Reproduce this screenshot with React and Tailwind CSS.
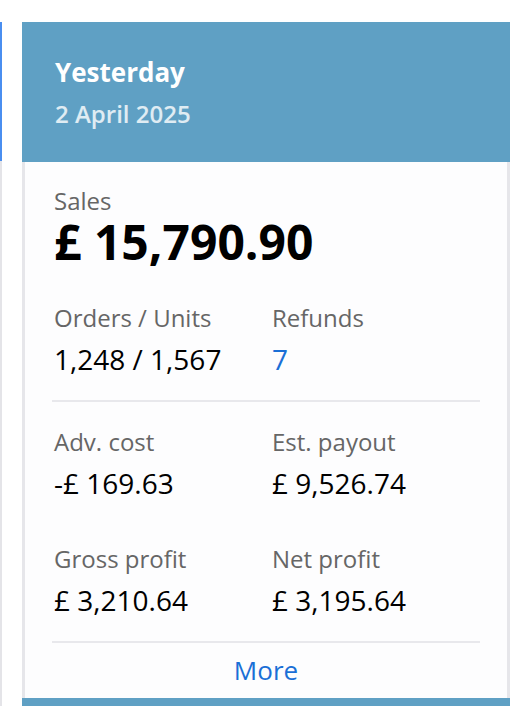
import { Fragment } from "react";

const rows = [
  [
    { label: "Orders / Units", value: "1,248 / 1,567" },
    { label: "Refunds", value: "7", link: true },
  ],
  [
    { label: "Adv. cost", value: "-£ 169.63" },
    { label: "Est. payout", value: "£ 9,526.74" },
  ],
  [
    { label: "Gross profit", value: "£ 3,210.64" },
    { label: "Net profit", value: "£ 3,195.64" },
  ],
];

function Stat({ label, value, link }) {
  return (
    <div className="flex flex-col">
      <span className="text-[24px] leading-[28px] text-[#666]">{label}</span>
      <span
        className={
          "mt-[9px] text-[28px] leading-[36px] " +
          (link ? "text-[#1a6fd6]" : "text-black")
        }
      >
        {value}
      </span>
    </div>
  );
}

export default function App() {
  return (
    <div
      className="flex min-h-[720px] bg-white pt-[22px]"
      style={{ fontFamily: '"Open Sans", "Noto Sans", sans-serif' }}
    >
      {/* edge of the previous card */}
      <div className="flex h-[684px] w-[2px] flex-col">
        <div className="h-[139px] bg-[#4a8ef0]" />
        <div className="flex-1 bg-[#e4e4e8]" />
      </div>

      <div className="ml-[20px] flex h-[684px] w-[488px] flex-col">
        <div className="h-[140px] bg-[#5fa0c4] px-[33px] pt-[32px]">
          <div className="text-[26px] font-bold leading-[36px] text-white">Yesterday</div>
          <div className="mt-[9px] text-[24px] font-semibold leading-[30px] text-white/80">
            2 April 2025
          </div>
        </div>

        <div className="flex flex-1 flex-col border-x-[3px] border-[#e6e6ea] bg-[#fdfdfe] px-[29px]">
          <div className="pt-[25px] text-[24px] leading-[28px] text-[#666]">Sales</div>
          <div className="mt-[5px] text-[48px] font-bold leading-[44px] text-black">£ 15,790.90</div>

          {rows.map((row, i) => (
            <Fragment key={i}>
              {i === 1 ? <div className="-mx-[2px] mt-[23px] h-[2px] bg-[#e8e8ec]" /> : null}
              <div
                className={
                  "grid grid-cols-[218px_1fr] " +
                  (i === 0 ? "mt-[40px]" : i === 1 ? "mt-[26px]" : "mt-[44px]")
                }
              >
                {row.map((s) => (
                  <Stat key={s.label} {...s} />
                ))}
              </div>
            </Fragment>
          ))}

          <div className="-mx-[2px] mt-[23px] h-[2px] bg-[#e8e8ec]" />
          <div className="flex flex-1 items-center justify-center text-[26px] text-[#1a6fd6]">
            More
          </div>
        </div>

        <div className="h-[8px] bg-[#5fa0c4]" />
      </div>
    </div>
  );
}
